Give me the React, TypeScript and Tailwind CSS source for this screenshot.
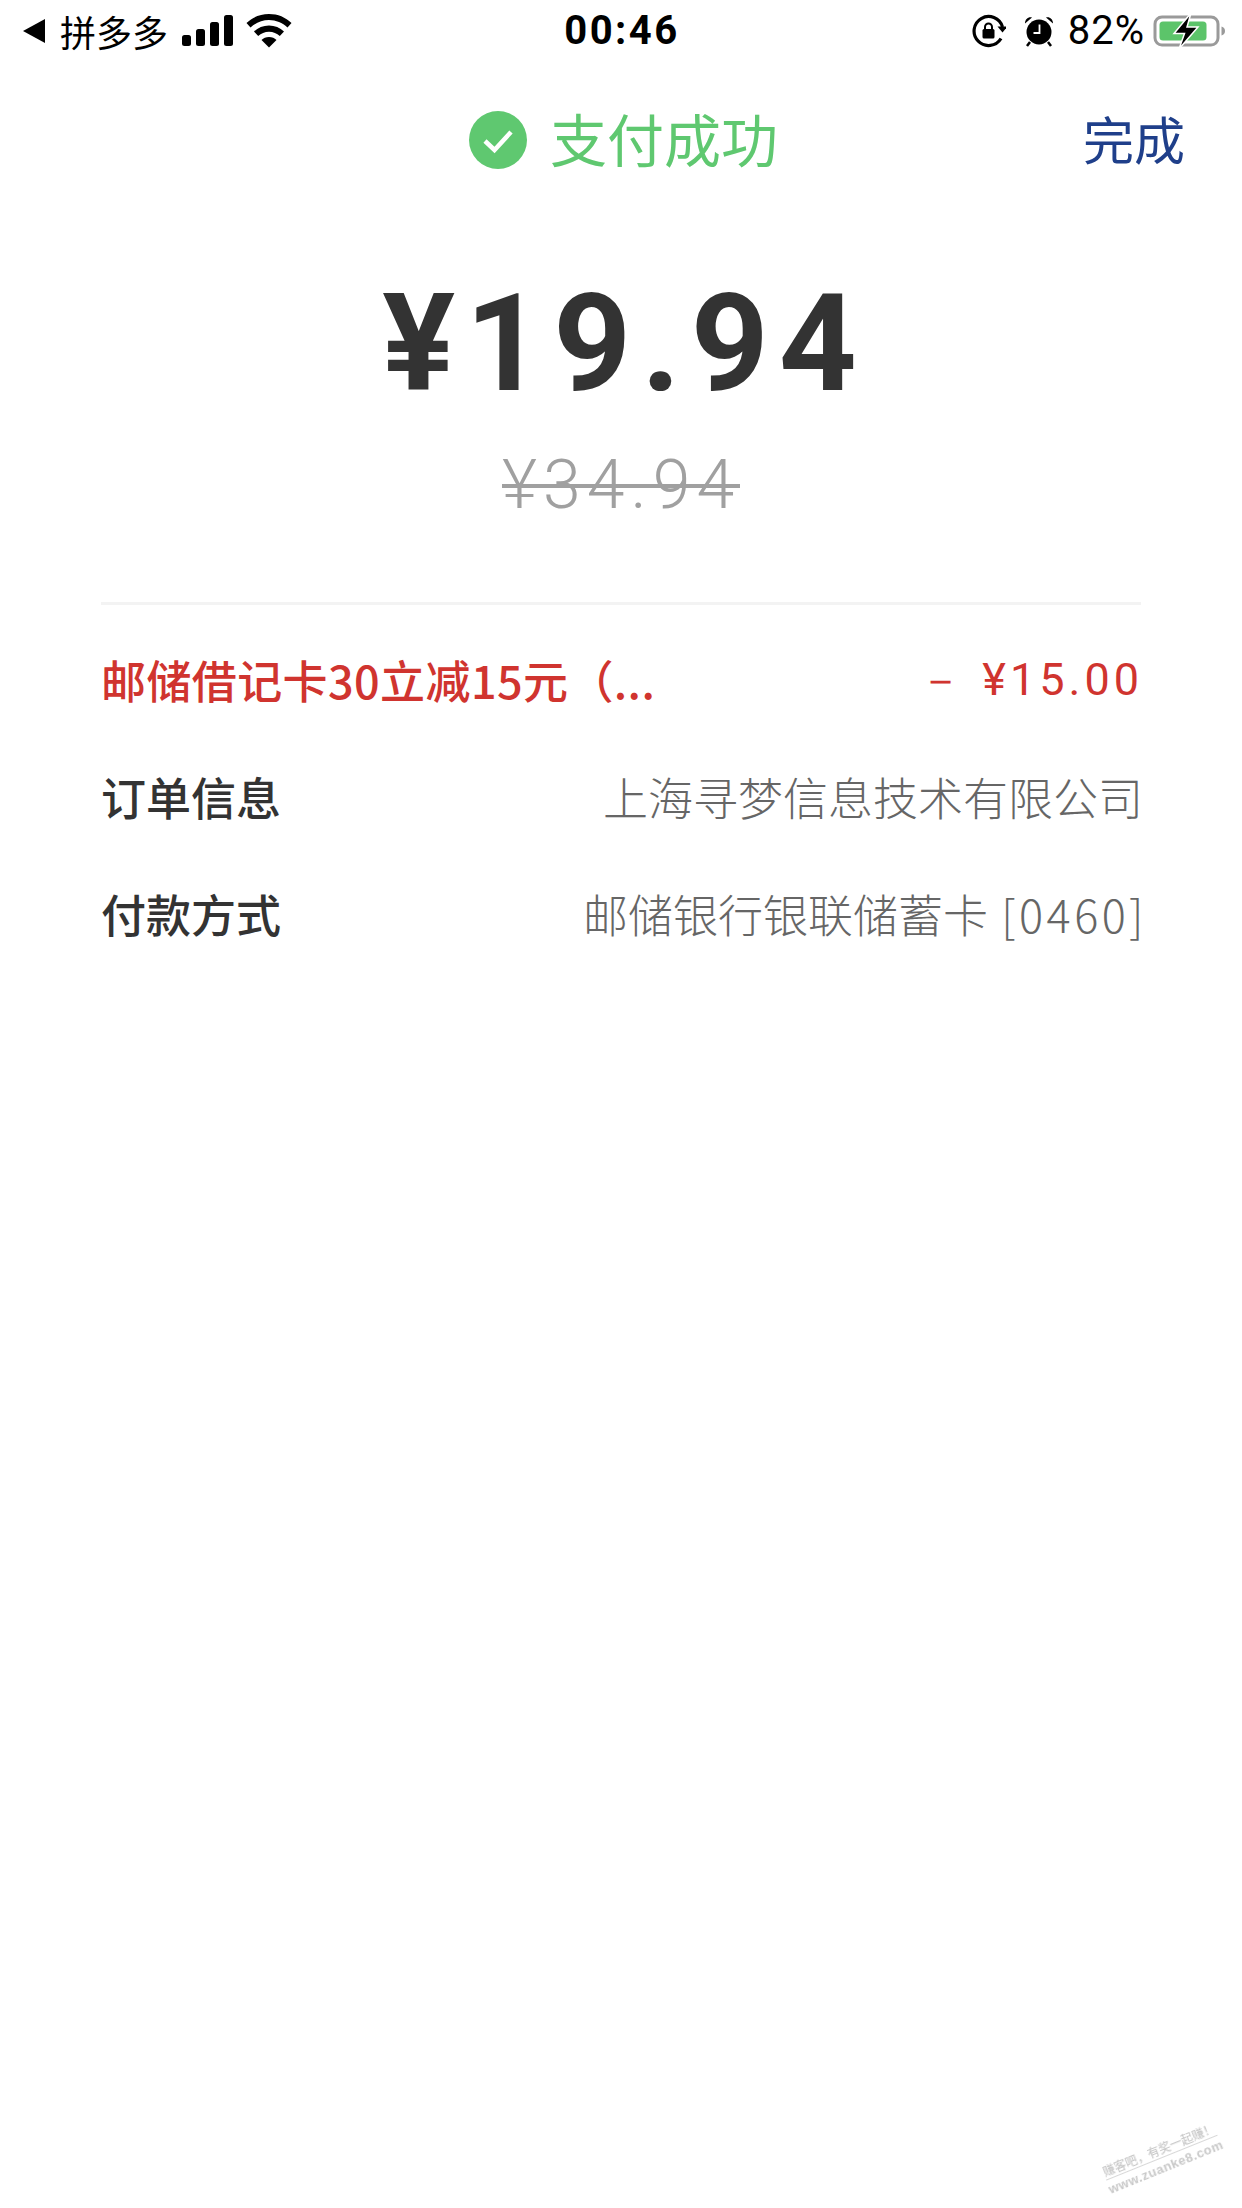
const CJK = "font-['Noto_Sans_CJK_SC','Noto_Sans',sans-serif]";

function SignalIcon() {
  return (
    <svg width="52" height="32" viewBox="0 0 52 32" fill="#000">
      <rect x="0" y="20" width="9" height="11" rx="2.5" />
      <rect x="14" y="14" width="9" height="17" rx="2.5" />
      <rect x="28" y="7" width="9" height="24" rx="2.5" />
      <rect x="42" y="0" width="9" height="31" rx="2.5" />
    </svg>
  );
}

function WifiIcon() {
  return (
    <svg width="46" height="34" viewBox="0 0 46 34" fill="#000">
      <path d="M23 0C14 0 6.5 3.300 0.500 9L4.500 13.500C9.500 8.800 16 6 23 6s13.500 2.800 18.500 7.500L45.500 9C39.500 3.300 32 0 23 0z" />
      <path d="M23 11.500c-5.800 0-11 2.200-15 6l4.200 4.500c2.900-2.700 6.600-4.300 10.800-4.300s7.900 1.600 10.800 4.300l4.200-4.500c-4-3.800-9.200-6-15-6z" />
      <path d="M23 23c-3 0-5.600 1.100-7.500 2.900L23 33.500l7.500-7.600C28.600 24.100 26 23 23 23z" />
    </svg>
  );
}

function RotationLockIcon() {
  return (
    <svg width="34" height="34" viewBox="0 0 34 34" fill="none">
      <path d="M29 24.500A14.500 14.500 0 1 1 30.500 13" stroke="#000" strokeWidth="3.200" />
      <path d="M25.500 12.500h10l-5 6z" fill="#000" />
      <rect x="10.500" y="15" width="12" height="9.500" rx="1.500" fill="#000" />
      <path d="M13 15.500v-2.500a3.500 3.500 0 0 1 7 0v2.500" stroke="#000" strokeWidth="2" />
    </svg>
  );
}

function AlarmIcon() {
  return (
    <svg width="30" height="32" viewBox="0 0 30 32" fill="none">
      <circle cx="15" cy="17" r="12.500" fill="#000" />
      <path d="M1 8.500C1 4 4.500 1.500 8 2.500zM29 8.500C29 4 25.500 1.500 22 2.500z" fill="#000" />
      <path d="M6 27l-3 4M24 27l3 4" stroke="#000" strokeWidth="2.500" />
      <path d="M15.500 9.500v8.500h-6" stroke="#fff" strokeWidth="1.800" />
    </svg>
  );
}

function BatteryIcon() {
  return (
    <svg width="74" height="36" viewBox="0 0 74 36" fill="none">
      <rect x="2" y="4" width="63" height="28" rx="7" stroke="#9a9a9a" strokeWidth="3" />
      <rect x="6.500" y="8.500" width="47" height="19" rx="3.500" fill="#5cc46a" />
      <path d="M68.500 13.500c2.500 0.700 3.500 2.500 3.500 4.500s-1 3.800-3.500 4.500z" fill="#9a9a9a" />
      <path d="M38 0L21 20.500h10.500L26 36 45 14H34L38 0z" fill="#000" stroke="#fff" strokeWidth="1.500" />
    </svg>
  );
}

function StatusBar() {
  return (
    <div className={`grid h-[60px] grid-cols-[1fr_auto_1fr] items-center pl-[23px] pr-[15px] pt-[2px] text-black ${CJK}`}>
      <div className="flex items-center">
        <div className="h-0 w-0 border-y-[12px] border-r-[22px] border-y-transparent border-r-black" />
        <span className="ml-[15px] text-[36px] leading-none">拼多多</span>
        <div className="ml-[14px] flex items-center gap-[12px]">
          <SignalIcon />
          <WifiIcon />
        </div>
      </div>
      <span className="mr-[6px] font-['Roboto',sans-serif] text-[40px] font-bold leading-none tracking-[2.500px]">00:46</span>
      <div className="flex items-center justify-end">
        <RotationLockIcon />
        <div className="ml-[18px]"><AlarmIcon /></div>
        <span className="ml-[14px] font-['Roboto',sans-serif] text-[40px] leading-none tracking-[1px]">82%</span>
        <div className="ml-[8px]"><BatteryIcon /></div>
      </div>
    </div>
  );
}

function Header() {
  return (
    <div className={`grid h-[160px] grid-cols-[1fr_auto_1fr] items-center pr-[57px] ${CJK}`}>
      <div />
      <div className="ml-[62px] flex items-center gap-[23px]">
        <svg width="58" height="58" viewBox="0 0 58 58">
          <circle cx="29" cy="29" r="29" fill="#5fc870" />
          <path d="M16 30l9.500 9L42 21" fill="none" stroke="#fff" strokeWidth="4.500" />
        </svg>
        <span className="mb-[5px] text-[57px] leading-none text-[#5fc870]">支付成功</span>
      </div>
      <span className="mb-[3px] justify-self-end text-[51px] leading-none text-[#1f3f8a]">完成</span>
    </div>
  );
}

function Watermark() {
  return (
    <div className={`absolute bottom-[32px] right-[18px] flex -rotate-[22deg] flex-col items-center gap-[1px] text-[#c9c9c9] blur-[0.6px] ${CJK}`}>
      <span className="border-b border-[#d8d8d8] text-[12px] font-medium leading-[17px]">赚客吧，有奖一起赚！</span>
      <span className="font-['Liberation_Sans',sans-serif] text-[13px] font-bold leading-[17px] tracking-[0.5px]">www.zuanke8.com</span>
    </div>
  );
}

export default function App() {
  return (
    <div className="relative h-[2208px] w-[1242px] overflow-hidden bg-white">
      <StatusBar />
      <Header />

      <div className="flex flex-col items-center font-['Roboto',sans-serif]">
        <div className="mt-[68px] pl-[7px] text-[136px] font-bold leading-[112px] tracking-[10px] text-[#333333]">¥19.94</div>
        <div className="relative mt-[55px] text-[68px] font-light leading-[60px] tracking-[6px] text-[#a0a0a0]">
          ¥34.94
          <div className="absolute inset-x-0 top-[29px] h-[4px] bg-[#a0a0a0]" />
        </div>
      </div>

      <div className="mx-[101px] mt-[87px] h-[3px] bg-[#f3f3f3]" />

      <div className={`mt-[16px] pl-[101px] pr-[99px] text-[45px] leading-none ${CJK}`}>
        <div className="flex h-[117px] items-center justify-between text-[#d0342f]">
          <span className="font-medium tracking-[0.4px]">邮储借记卡30立减15元（...</span>
          <span className="font-['Roboto',sans-serif] tracking-[4px]">－ ¥15.00</span>
        </div>
        <div className="flex h-[117px] items-center justify-between">
          <span className="font-medium text-[#333333]">订单信息</span>
          <span className="font-light text-[#666666]">上海寻梦信息技术有限公司</span>
        </div>
        <div className="flex h-[117px] items-center justify-between">
          <span className="font-medium text-[#333333]">付款方式</span>
          <span className="-mr-[4px] font-light text-[#666666]">
            邮储银行银联储蓄卡<span className="tracking-[3.500px]"> [0460]</span>
          </span>
        </div>
      </div>

      <Watermark />
    </div>
  );
}
